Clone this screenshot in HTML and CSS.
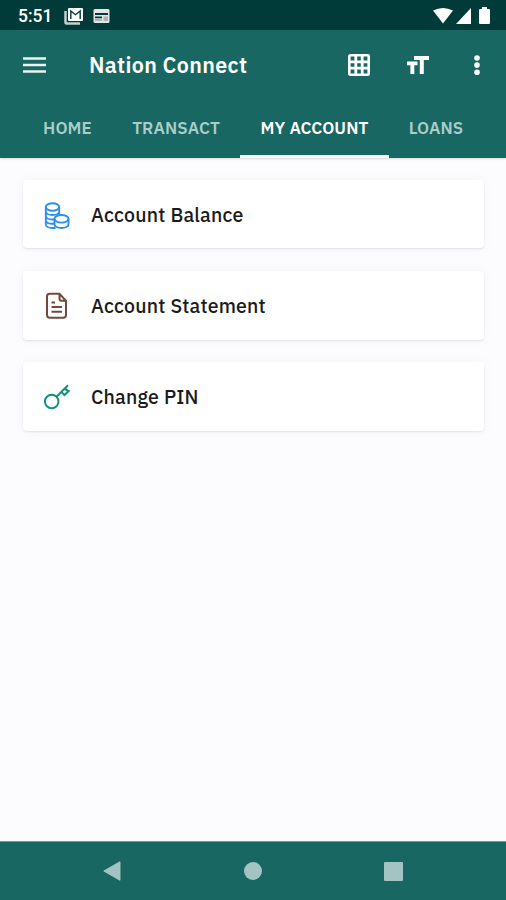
FILE: index.html
```html
<!DOCTYPE html>
<html lang="en">
<head>
    <meta charset="UTF-8">
    <meta name="viewport" content="width=device-width, initial-scale=1.0">
    <title>Nation Connect</title>
    <link rel="stylesheet" href="styles.css">
</head>
<body>
    <div class="status-bar">
        <span class="clock">5:51</span>
        <svg class="mail-icon" width="20" height="18" viewBox="0 0 20 18">
            <path d="M1.500 4v11.500q0 1 1 1H16" fill="none" stroke="#c5d0cf" stroke-width="2.500"/>
            <rect x="4" y="1" width="15" height="13" rx="1" fill="#fff"/>
            <path d="M6.800 12V4l4.700 3.700L16.200 4v8" fill="none" stroke="#003b39" stroke-width="1.400"/>
        </svg>
        <svg class="news-icon" width="17" height="16" viewBox="0 0 17 16">
            <rect x="0.500" y="1" width="16" height="14" rx="1.500" fill="#e3e5e5"/>
            <path d="M2 5h13v2H2zM2 8.500h7v1.500H2z" fill="#003b39"/>
            <path d="M2 10h7v3H2zM10.500 8.500H15V13h-4.500z" fill="#a9b5b4"/>
        </svg>
        <div class="signals">
            <svg width="20" height="16" viewBox="0 0 20 16"><path d="M0 2.500Q10-2.500 20 2.500L10 15.500z" fill="#fff"/></svg>
            <svg width="15" height="16" viewBox="0 0 15 16"><path d="M15 0v16H0z" fill="#fff"/></svg>
            <svg width="11" height="17" viewBox="0 0 11 17"><path d="M3 0h5v2h2q1 0 1 1v13q0 1-1 1H1q-1 0-1-1V3q0-1 1-1h2z" fill="#fff"/></svg>
        </div>
    </div>

    <div class="app-header">
        <div class="toolbar">
            <svg class="menu-icon" width="23" height="16" viewBox="0 0 23 16"><path d="M0 1.500h23M0 8h23M0 14.500h23" stroke="#e9f3f1" stroke-width="2.600"/></svg>
            <h1>Nation Connect</h1>
            <div class="actions">
                <svg width="22" height="22" viewBox="0 0 22 22">
                    <rect x="1.300" y="1.300" width="19.400" height="19.400" rx="1" fill="none" stroke="#fff" stroke-width="2.600"/>
                    <path d="M7.800 1v20M14.200 1v20M1 7.800h20M1 14.200h20" stroke="#fff" stroke-width="2.800"/>
                </svg>
                <svg class="text-size" width="22" height="18" viewBox="0 0 22 18"><path d="M7 0h15v4h-5.200V18h-4V4H7zM0 5.500h10.500v3.800H7.300V18H3.400V9.300H0z" fill="#fff"/></svg>
                <svg class="more" width="6" height="21" viewBox="0 0 6 21"><circle cx="3" cy="3" r="2.800" fill="#fff"/><circle cx="3" cy="10.100" r="2.800" fill="#fff"/><circle cx="3" cy="17.200" r="2.800" fill="#fff"/></svg>
            </div>
        </div>
        <div class="tabs">
            <div class="tab home"><span>HOME</span></div>
            <div class="tab transact"><span>TRANSACT</span></div>
            <div class="tab account active"><span>MY ACCOUNT</span></div>
            <div class="tab loans"><span>LOANS</span></div>
        </div>
    </div>

    <div class="content">
        <div class="card">
            <svg class="coins" width="28" height="28" viewBox="0 0 28 28" fill="none" stroke="#2a8fee" stroke-width="1.900">
                <ellipse cx="9.500" cy="5" rx="6.700" ry="3.700"/>
                <path d="M2.800 5v17.500c0 2 3 3.500 6.700 3.500h3M16.200 5v8M2.800 9.500c0 2 3 3.500 6.700 3.500s6.700-1.500 6.700-3.500M2.800 14c0 2 3 3.500 6.700 3.500h1.500M2.800 18.300c0 2 3 3.500 6.700 3.500h1.500"/>
                <ellipse cx="18.500" cy="16.800" rx="7" ry="3.800"/>
                <path d="M11.500 17v5.500c0 2 3.200 3.500 7 3.500s7-1.500 7-3.500V17"/>
            </svg>
            <span>Account Balance</span>
        </div>
        <div class="card">
            <svg class="document" width="28" height="28" viewBox="0 0 28 28" fill="none" stroke="#74483f" stroke-width="2">
                <path d="M16.500 1.800H6.700q-2.700 0-2.700 2.700v18.500q0 2.700 2.700 2.700h13.600q2.700 0 2.700-2.700V8.800zM16.500 1.800v5q0 2 2 2H23M8.500 10.500h3.500M8.500 15h10.500M8.500 19.800h10.500"/>
            </svg>
            <span>Account Statement</span>
        </div>
        <div class="card">
            <svg class="key" width="28" height="28" viewBox="0 0 28 28" fill="none" stroke="#159080" stroke-width="2">
                <circle cx="8.700" cy="18.500" r="6.800"/>
                <path d="M13.500 13.700L25 2.200M22.500 4.700l.5 2 2.700 1.300-4.200 4-2.800-2.800"/>
            </svg>
            <span>Change PIN</span>
        </div>
    </div>

    <div class="nav-bar">
        <svg class="back" width="18" height="20" viewBox="0 0 18 20"><path d="M17 .7v18.600L.8 10z" fill="#a3c4c2" stroke="#a3c4c2" stroke-linejoin="round"/></svg>
        <div class="circle"></div>
        <div class="square"></div>
    </div>
</body>
</html>
```
FILE: styles.css
```css
* {
    box-sizing: border-box;
}

body {
    margin: 0;
    height: 900px;
    display: flex;
    flex-direction: column;
    overflow: hidden;
    background-color: #fcfcff;
    font-family: "IBM Plex Sans", "Open Sans", sans-serif;
    font-weight: 600;
    white-space: nowrap;
}

svg {
    display: block;
    flex: none;
}

.status-bar {
    height: 30px;
    flex: none;
    display: flex;
    align-items: center;
    padding: 1px 16px 0 18px;
    background-color: #003b39;
}

.clock {
    width: 46px;
    color: #fff;
    font: 500 17.5px Roboto, sans-serif;
}

.news-icon {
    margin-left: 9px;
}

.signals {
    display: flex;
    align-items: center;
    margin-left: auto;
    gap: 3px;
}

.signals svg:last-child {
    margin-left: 5px;
}

.app-header {
    height: 128px;
    flex: none;
    background-color: #186762;
    box-shadow: 0 1px 2px #0002;
}

.toolbar {
    height: 70px;
    display: flex;
    align-items: center;
    padding: 0 26px 0 23px;
}

h1 {
    margin: 0 0 0 43px;
    color: #fff;
    font-size: 21.5px;
    font-weight: 600;
    letter-spacing: 0.35px;
}

.actions {
    display: flex;
    align-items: center;
    margin-left: auto;
}

.text-size {
    margin-left: 37px;
}

.more {
    margin-left: 45px;
}

.tabs {
    height: 58px;
    display: flex;
    padding-left: 23px;
}

.tab {
    height: 58px;
    padding-bottom: 3px;
    display: flex;
    align-items: center;
    justify-content: center;
    color: #a9cdca;
    font-size: 17px;
    font-weight: 600;
    letter-spacing: 0.1px;
}

.home { width: 89px; }
.transact { width: 128px; }
.account { width: 149px; }
.loans { width: 94px; }

.active {
    color: #fff;
    padding-bottom: 0;
    border-bottom: 3px solid #f4f7fa;
}

.content {
    flex: 1;
    display: flex;
    flex-direction: column;
    gap: 23px;
    padding: 22px 22px 0 23px;
}

.card {
    height: 68px;
    display: flex;
    align-items: center;
    padding-left: 20px;
    gap: 20px;
    background-color: #fff;
    border-radius: 4px;
    box-shadow: 0 1px 2px #00000018, 0 0 14px #00000009;
    color: #1b1b1b;
    font-size: 19.5px;
    font-weight: 500;
    letter-spacing: 0.2px;
}

.card + .card {
    height: 69px;
}

.card:last-child {
    margin-top: -1px;
}

/* the coin stack sits a little lower than the other icons */
.coins {
    margin-top: 3px;
}

.nav-bar {
    height: 59px;
    flex: none;
    display: flex;
    align-items: center;
    padding-left: 103px;
    background-color: #186762;
    border-top: 1px solid #6f9f9d;
}

.circle {
    width: 18px;
    height: 18px;
    margin-left: 123px;
    border-radius: 50%;
    background-color: #a3c4c2;
}

.square {
    width: 19px;
    height: 19px;
    margin-left: 122px;
    border-radius: 1px;
    background-color: #a3c4c2;
}
```
